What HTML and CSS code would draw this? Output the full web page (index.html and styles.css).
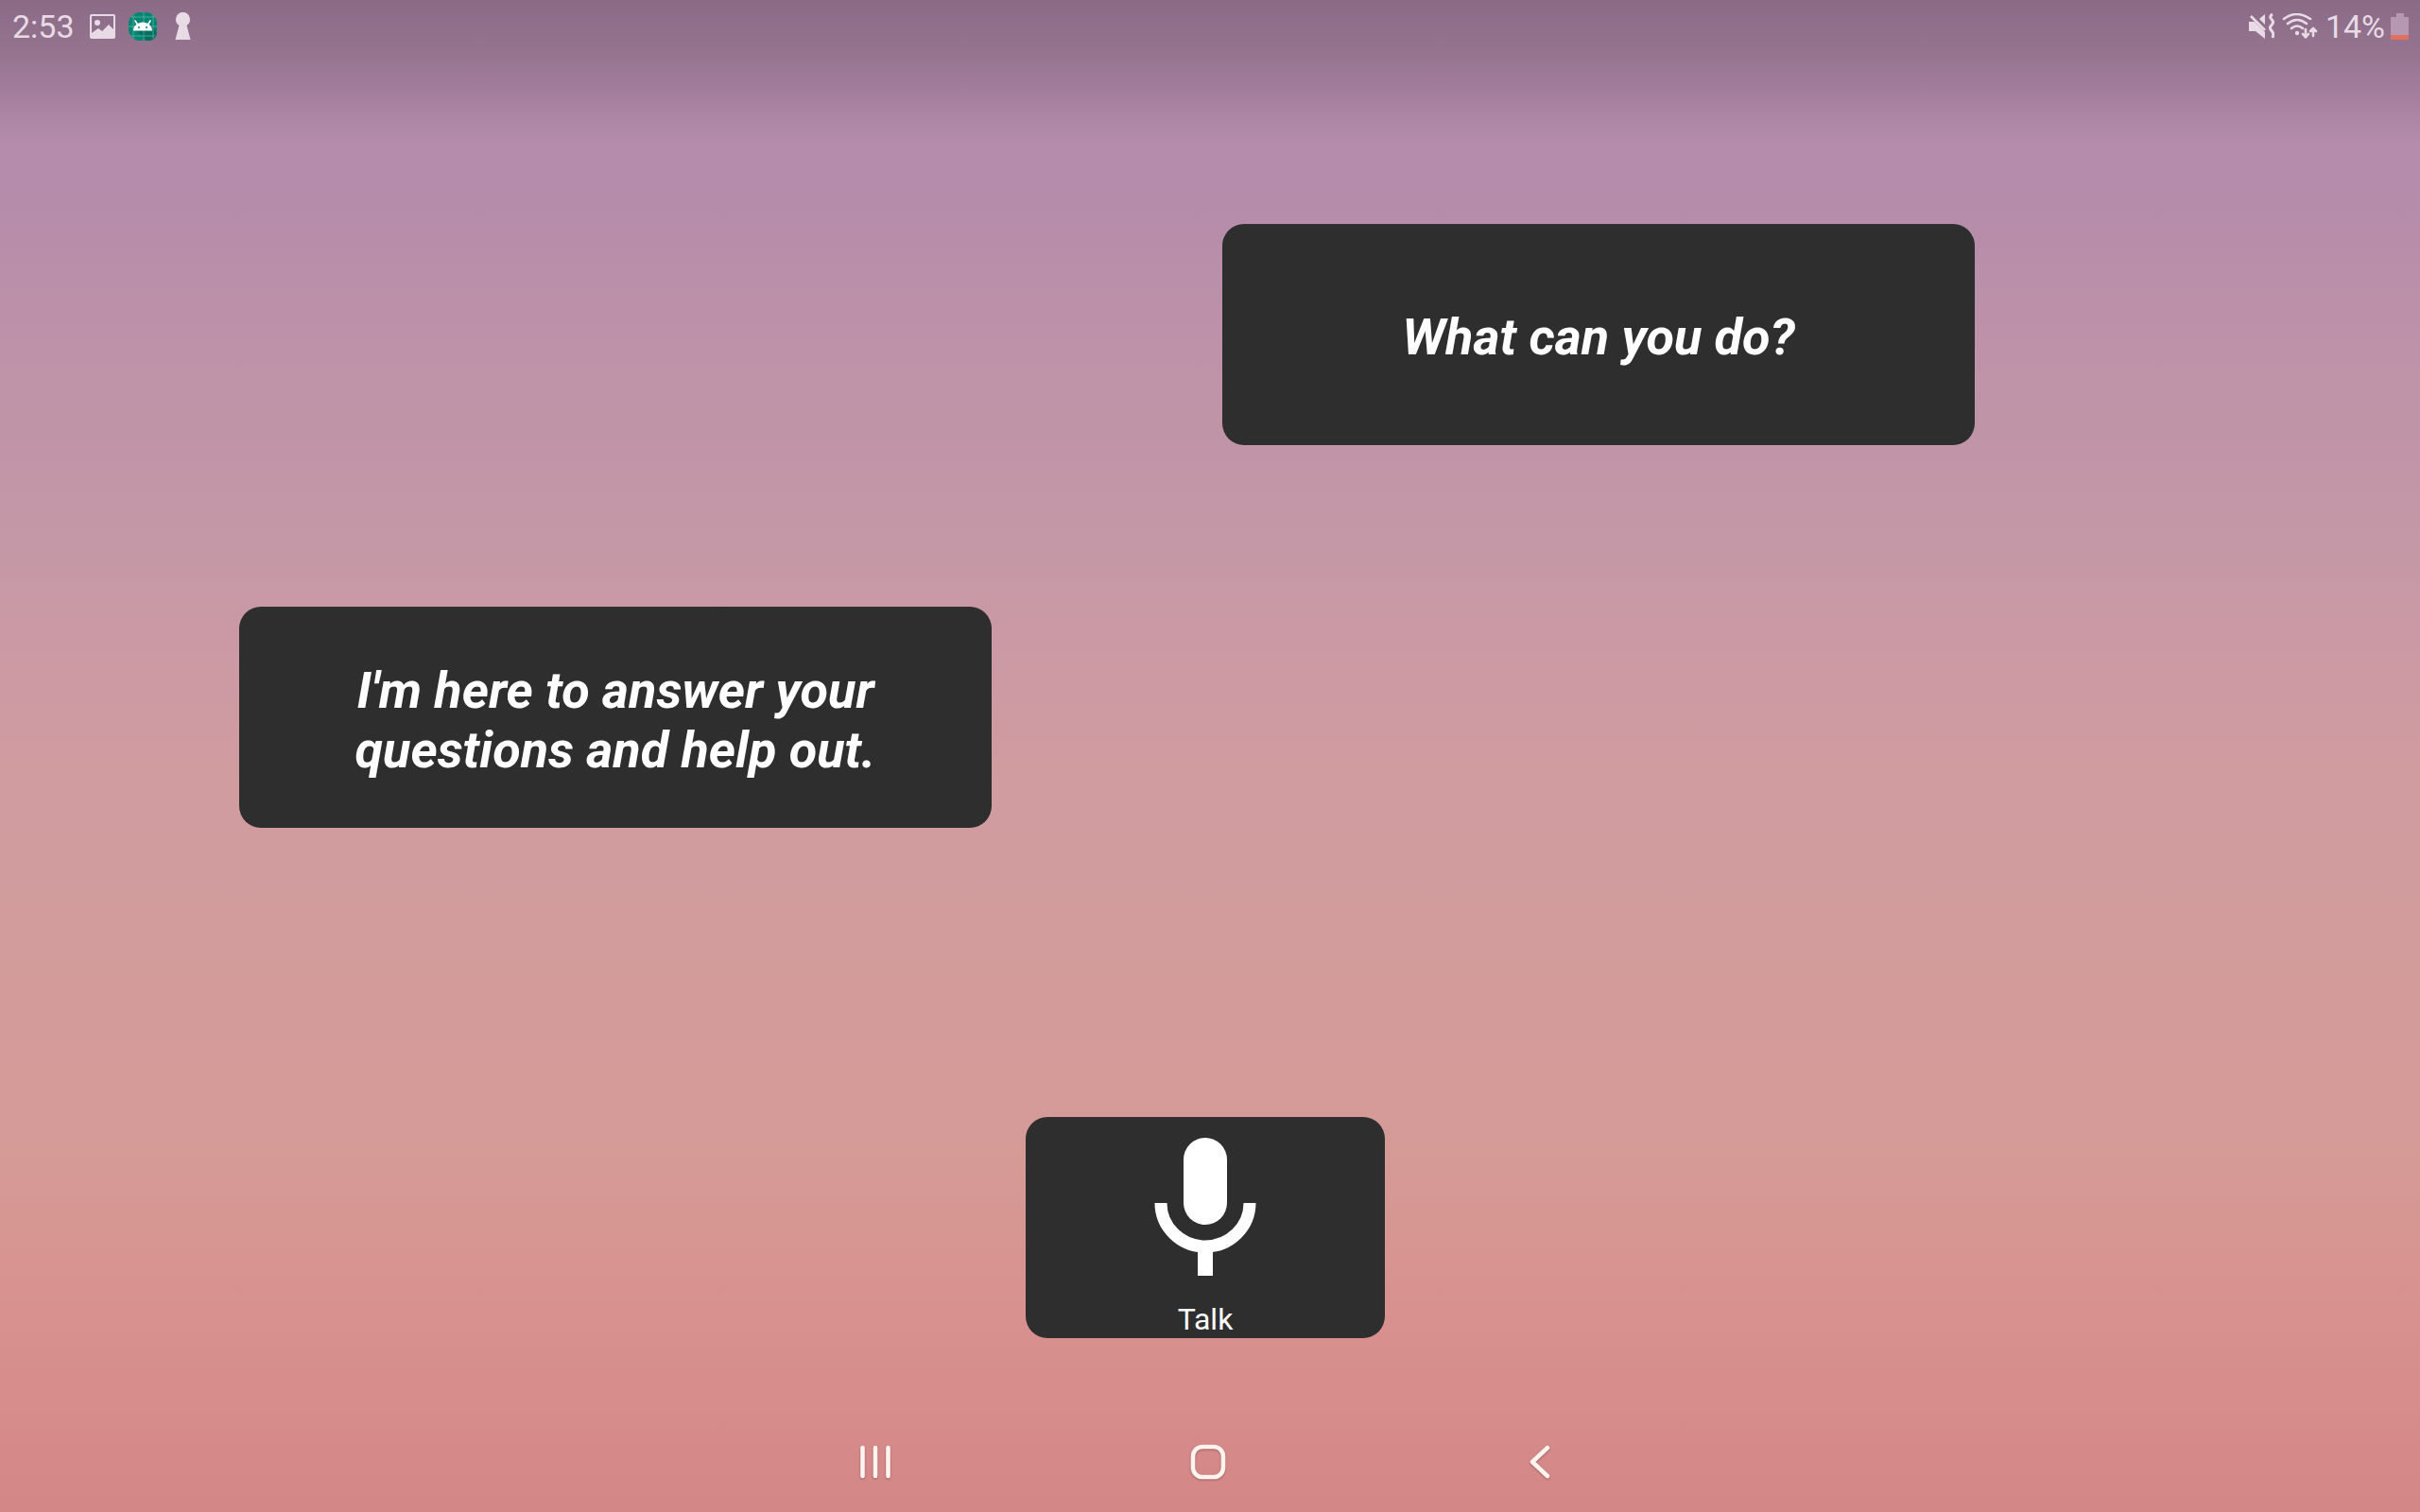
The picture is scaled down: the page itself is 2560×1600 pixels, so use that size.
FILE: index.html
```html
<!DOCTYPE html>
<html lang="en">
<head>
<meta charset="utf-8">
<meta name="viewport" content="width=device-width, initial-scale=1">
<title>Voice assistant</title>
<link rel="stylesheet" href="styles.css">
</head>
<body>
<header class="status-bar">
  <div class="status-group status-left">
    <time class="clock">2:53</time>
    <svg class="picture-icon" width="28" height="26" viewBox="0 0 28 26" aria-hidden="true">
      <path fill="#e8dbe6" fill-rule="evenodd" d="M2 0H25Q27 0 27 2V24Q27 26 25 26H2Q0 26 0 24V2Q0 0 2 0ZM2 2V20L9 15L13 18L20 11L25 16V2ZM8 6a3 3 0 1 1 0 6a3 3 0 1 1 0-6Z"/>
    </svg>
    <svg class="app-icon" width="32" height="32" viewBox="0 0 32 32" aria-hidden="true">
      <rect x="1" y="1" width="30" height="30" rx="12" fill="#078573"/>
      <path d="M9 20L20 31H24Q31 29 31 22L25 14Z" fill="#05705f"/>
      <path d="M6 3V29M17 1V31M27 3V29M3 6H29M1 16H31M3 26H29" stroke="#76c1b3" stroke-width="0.6" fill="none"/>
      <path d="M6 20.500C6 15 11 11.500 16 11.500S26 15 26 20.500Z" fill="#fff"/>
      <path d="M10.500 14L8 10M21.500 14L24 10" stroke="#fff" stroke-width="1.6" stroke-linecap="round"/>
      <circle cx="12" cy="17" r="1" fill="#078573"/><circle cx="20" cy="17" r="1" fill="#078573"/>
    </svg>
    <svg class="keyhole-icon" width="17" height="30" viewBox="0 0 17 30" aria-hidden="true">
      <path fill="#e8dbe6" d="M8.500 0a7.500 7.500 0 0 1 4 13.800L16.500 29H0.500L4.500 13.800A7.500 7.500 0 0 1 8.500 0Z"/>
    </svg>
  </div>
  <div class="status-group status-right">
    <svg width="27" height="28" viewBox="0 0 27 28" aria-hidden="true">
      <path fill="#e8dbe6" d="M0 9H6L17 20V27L7 19H0ZM11 6L17 1V12Z"/>
      <path d="M2 3L17 18" stroke="#e8dbe6" stroke-width="2.600"/>
      <path d="M25 1Q21 3.500 24 6.500T24 12.500T24 18.500T25 26" fill="none" stroke="#e8dbe6" stroke-width="3"/>
    </svg>
    <svg width="38" height="28" viewBox="0 0 38 28" aria-hidden="true">
      <g fill="none" stroke="#e8dbe6" stroke-width="2.600" stroke-linecap="round" stroke-linejoin="round">
        <path d="M2 6Q15-4 30 6M6 11Q16 3 26 11M10 16Q16 11 22 16"/>
        <path d="M25 17V25M22 22L25 25.500L28 22M33 24V17M30 19L33 16L36 19"/>
      </g>
      <circle cx="16" cy="21" r="2.200" fill="#e8dbe6"/>
    </svg>
    <span class="battery-level">14%</span>
    <svg class="battery-icon" width="19" height="28" viewBox="0 0 19 28" aria-hidden="true">
      <path fill="#b698b2" d="M6 0H14V4H18Q19 4 19 5V27Q19 28 18 28H1Q0 28 0 27V5Q0 4 1 4H6Z"/>
      <path fill="#e3705e" d="M0 23H19V27Q19 28 18 28H1Q0 28 0 27Z"/>
    </svg>
  </div>
</header>

<main class="assistant">
  <section class="conversation" aria-label="Conversation">
    <p class="bubble bubble-user">What can you do?</p>
    <p class="bubble bubble-assistant">I'm here to answer your questions and help out.</p>
  </section>
  <button class="talk" type="button">
    <svg class="mic-icon" width="108" height="148" viewBox="0 0 108 148" aria-hidden="true">
      <rect x="31" y="1" width="46" height="92" rx="23" fill="#fff"/>
      <path d="M7 70A47 46 0 0 0 101 70" fill="none" stroke="#fff" stroke-width="13"/>
      <path d="M46 118H62V147H46Z" fill="#fff"/>
    </svg>
    <span>Talk</span>
  </button>
</main>

<nav class="system-nav" aria-label="System">
  <button class="nav-button" type="button" aria-label="Recent apps">
    <svg width="40" height="40" viewBox="0 0 40 40" aria-hidden="true"><path d="M6.500 5V35M20 5V35M33.500 5V35" fill="none" stroke="#fff3f0" stroke-width="4.600" stroke-linecap="round"/></svg>
  </button>
  <button class="nav-button" type="button" aria-label="Home">
    <svg width="40" height="40" viewBox="0 0 40 40" aria-hidden="true"><rect x="4" y="4" width="32" height="32" rx="10" fill="none" stroke="#fff3f0" stroke-width="4.600"/></svg>
  </button>
  <button class="nav-button" type="button" aria-label="Back">
    <svg width="40" height="40" viewBox="0 0 40 40" aria-hidden="true"><path d="M27 5L11 20L27 35" fill="none" stroke="#fff3f0" stroke-width="4.600" stroke-linecap="round" stroke-linejoin="round"/></svg>
  </button>
</nav>
</body>
</html>
```
FILE: styles.css
```css
* {
  box-sizing: border-box;
}

body {
  display: flex;
  flex-direction: column;
  min-height: 100vh;
  margin: 0;
  font-family: Roboto, "Liberation Sans", sans-serif;
  color: #fff;
  background:
    linear-gradient(rgba(0, 0, 0, 0.24), rgba(0, 0, 0, 0.17) 60px, transparent 152px),
    linear-gradient(#b58cb0, #b58caa 14%, #bd91a8 22%, #c498a6 36%, #cb99a5 42%, #d09c9f 52%, #d39c9b 66%, #d59a96 77%, #d8918e 87%, #d38787);
}

button {
  border: 0;
  padding: 0;
  font: inherit;
  color: inherit;
  background: none;
}

svg {
  display: block;
  flex: none;
}

.status-bar {
  display: flex;
  justify-content: space-between;
  height: 56px;
  padding: 0 12px 0 13px;
  font-size: 34px;
  line-height: 56px;
  color: #e8dbe6;
}

.status-group {
  display: flex;
  align-items: center;
}

.status-left {
  gap: 16px;
}

.status-right {
  gap: 8px;
}

.app-icon {
  margin-left: -4px;
}

.keyhole-icon {
  margin-left: 2px;
}

.battery-icon {
  margin-left: -2px;
}

.assistant {
  flex: 1;
  display: flex;
  flex-direction: column;
  align-items: center;
}

.conversation {
  display: grid;
  grid-template-columns: 253fr 796fr 244fr 796fr 471fr;
  row-gap: 171px;
  width: 100%;
  padding-top: 181px;
}

.bubble {
  display: flex;
  align-items: center;
  justify-content: center;
  min-height: 234px;
  margin: 0;
  padding: 5px 112px 0;
  border-radius: 23px;
  background: #2e2e2e;
  font-size: 54px;
  font-style: italic;
  font-weight: 700;
  line-height: 63px;
  text-align: center;
}

.bubble-user {
  grid-column: 4;
}

.bubble-assistant {
  grid-column: 2;
}

.talk {
  display: flex;
  flex-direction: column;
  align-items: center;
  gap: 25px;
  width: 380px;
  min-height: 234px;
  margin: 306px 10px 0 0;
  padding-top: 21px;
  border-radius: 23px;
  background: #2e2e2e;
  font-size: 32px;
  line-height: 40px;
}

.system-nav {
  display: flex;
  justify-content: center;
  height: 106px;
  padding-right: 4px;
}

.nav-button {
  display: flex;
  align-items: center;
  justify-content: center;
  width: 352px;
  filter: drop-shadow(0 1px 1px rgba(80, 30, 30, 0.4));
}
```
